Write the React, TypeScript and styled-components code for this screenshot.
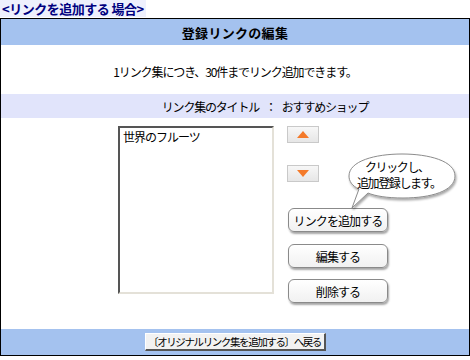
import styled, { createGlobalStyle } from 'styled-components';

const GlobalStyle = createGlobalStyle`
  html, body {
    margin: 0;
    padding: 0;
    background: #ffffff;
  }
  body {
    font-family: "Noto Sans CJK JP", "DejaVu Sans", sans-serif;
    font-size: 12px;
    color: #000;
  }
`

const Page = styled.div`
  width: 470px;
  height: 360px;
  display: flex;
  flex-direction: column;
  gap: 1px;
`

const CaseTag = styled.div`
  align-self: flex-start;
  line-height: 17px;
  padding: 0 2px;
  background: #eef0fd;
  color: #00007f;
  font-weight: 700;
  font-size: 13px;
  letter-spacing: -0.5px;
  white-space: nowrap;
`

const Frame = styled.div`
  width: 470px;
  height: 338px;
  box-sizing: border-box;
  border: 1px solid #000;
  display: flex;
  flex-direction: column;
`

const Band = styled.div`
  height: ${props => props.h}px;
  background: ${props => props.bg || '#ffffff'};
  display: flex;
  align-items: center;
  justify-content: center;
  flex-shrink: 0;
`

const HeaderTitle = styled.span`
  font-size: 13px;
  font-weight: 700;
  letter-spacing: 0.3px;
`

const InfoText = styled.span`
  font-size: 12px;
  letter-spacing: -1.1px;
  padding-top: 4px;
`

const TitleRow = styled.div`
  display: flex;
  gap: 6px;
  padding-left: 60px;
  font-size: 12px;
  letter-spacing: -1.2px;
`

const Main = styled.div`
  flex: 1;
  display: flex;
  padding: 8px 0 0 117px;
  gap: 13px;
`

const ListBox = styled.div`
  width: 156px;
  height: 168px;
  box-sizing: border-box;
  border-top: 2px solid #555;
  border-left: 2px solid #555;
  border-right: 2px solid #e4e1d8;
  border-bottom: 2px solid #e4e1d8;
  padding: 1px 3px;
  font-size: 12px;
  line-height: 15px;
  letter-spacing: -1px;
`

const Side = styled.div`
  position: relative;
  display: flex;
  flex-direction: column;
  align-items: flex-start;
`

const ArrowButton = styled.button`
  width: 32px;
  height: 17px;
  margin-top: ${props => props.mt}px;
  padding: 0;
  border: 1px solid #c9c9c9;
  background: linear-gradient(#f7f7f7, #e6e6e6);
  display: flex;
  align-items: center;
  justify-content: center;
`

const Triangle = styled.span`
  width: 0;
  height: 0;
  border-left: 6px solid transparent;
  border-right: 6px solid transparent;
  ${props => props.down
    ? 'border-top: 7px solid #f47a2a;'
    : 'border-bottom: 7px solid #f47a2a;'}
`

const RoundButton = styled.button`
  width: 100px;
  height: 24px;
  margin-top: ${props => props.mt}px;
  margin-left: 1px;
  padding: 0;
  border: 1px solid #8a8a8a;
  border-radius: 6px;
  background: linear-gradient(#ffffff, #f1f1f1);
  box-shadow: 1px 2px 2px rgba(0, 0, 0, 0.35);
  font-family: "Noto Sans CJK JP", "DejaVu Sans", sans-serif;
  font-size: 12px;
  color: #000;
  letter-spacing: -0.9px;
`

const Bubble = styled.div`
  position: absolute;
  left: 60px;
  top: 27px;
  width: 112px;
  height: 58px;
`

const BubbleText = styled.div`
  position: absolute;
  left: 10px;
  top: 6px;
  font-size: 12px;
  line-height: 16px;
  letter-spacing: -1.4px;
  white-space: nowrap;
`

const BubbleLine = styled.div`
  padding-left: ${props => props.indent || 0}px;
`

const BackButton = styled.button`
  width: 181px;
  height: 18px;
  padding: 0;
  border-top: 1px solid #fff;
  border-left: 1px solid #fff;
  border-right: 2px solid #555;
  border-bottom: 2px solid #555;
  background: #f2f2f2;
  font-family: "Noto Sans CJK JP", "DejaVu Sans", sans-serif;
  font-size: 10.5px;
  line-height: 14px;
  color: #000;
  letter-spacing: -1.4px;
  white-space: nowrap;
`

export default function App() {
  return (
    <Page>
      <GlobalStyle />
      <CaseTag>&lt;リンクを追加する 場合&gt;</CaseTag>
      <Frame>
        <Band h={26} bg="#a4c2ef">
          <HeaderTitle>登録リンクの編集</HeaderTitle>
        </Band>
        <Band h={49}>
          <InfoText>1リンク集につき、30件までリンク追加できます。</InfoText>
        </Band>
        <Band h={24} bg="#e1e4fb">
          <TitleRow>
            <span>リンク集のタイトル</span>
            <span>：</span>
            <span>おすすめショップ</span>
          </TitleRow>
        </Band>
        <Main>
          <ListBox>世界のフルーツ</ListBox>
          <Side>
            <ArrowButton mt={0}><Triangle /></ArrowButton>
            <ArrowButton mt={22}><Triangle down /></ArrowButton>
            <RoundButton mt={26}>リンクを追加する</RoundButton>
            <RoundButton mt={12}>編集する</RoundButton>
            <RoundButton mt={11}>削除する</RoundButton>
            <Bubble>
              <svg width="112" height="58" viewBox="0 0 112 58">
                <defs>
                  <filter id="sh" x="-10%" y="-10%" width="130%" height="140%">
                    <feDropShadow dx="1" dy="2" stdDeviation="1.2" floodColor="#000" floodOpacity="0.35" />
                  </filter>
                </defs>
                <path
                  d="M55 1 C82 1 108 8 108 23 C108 38 84 45 56 45 C40 45 28 43 21 40 L5 55 L12 36 C5 33 2 28 2 23 C2 8 28 1 55 1 Z"
                  fill="#fff"
                  stroke="#8c8c8c"
                  strokeWidth="1"
                  filter="url(#sh)"
                />
              </svg>
              <BubbleText>
                <BubbleLine indent={8}>クリックし、</BubbleLine>
                <BubbleLine>追加登録します。</BubbleLine>
              </BubbleText>
            </Bubble>
          </Side>
        </Main>
        <Band h={26} bg="#a4c2ef">
          <BackButton>〔オリジナルリンク集を追加する〕へ戻る</BackButton>
        </Band>
      </Frame>
    </Page>
  )
}
